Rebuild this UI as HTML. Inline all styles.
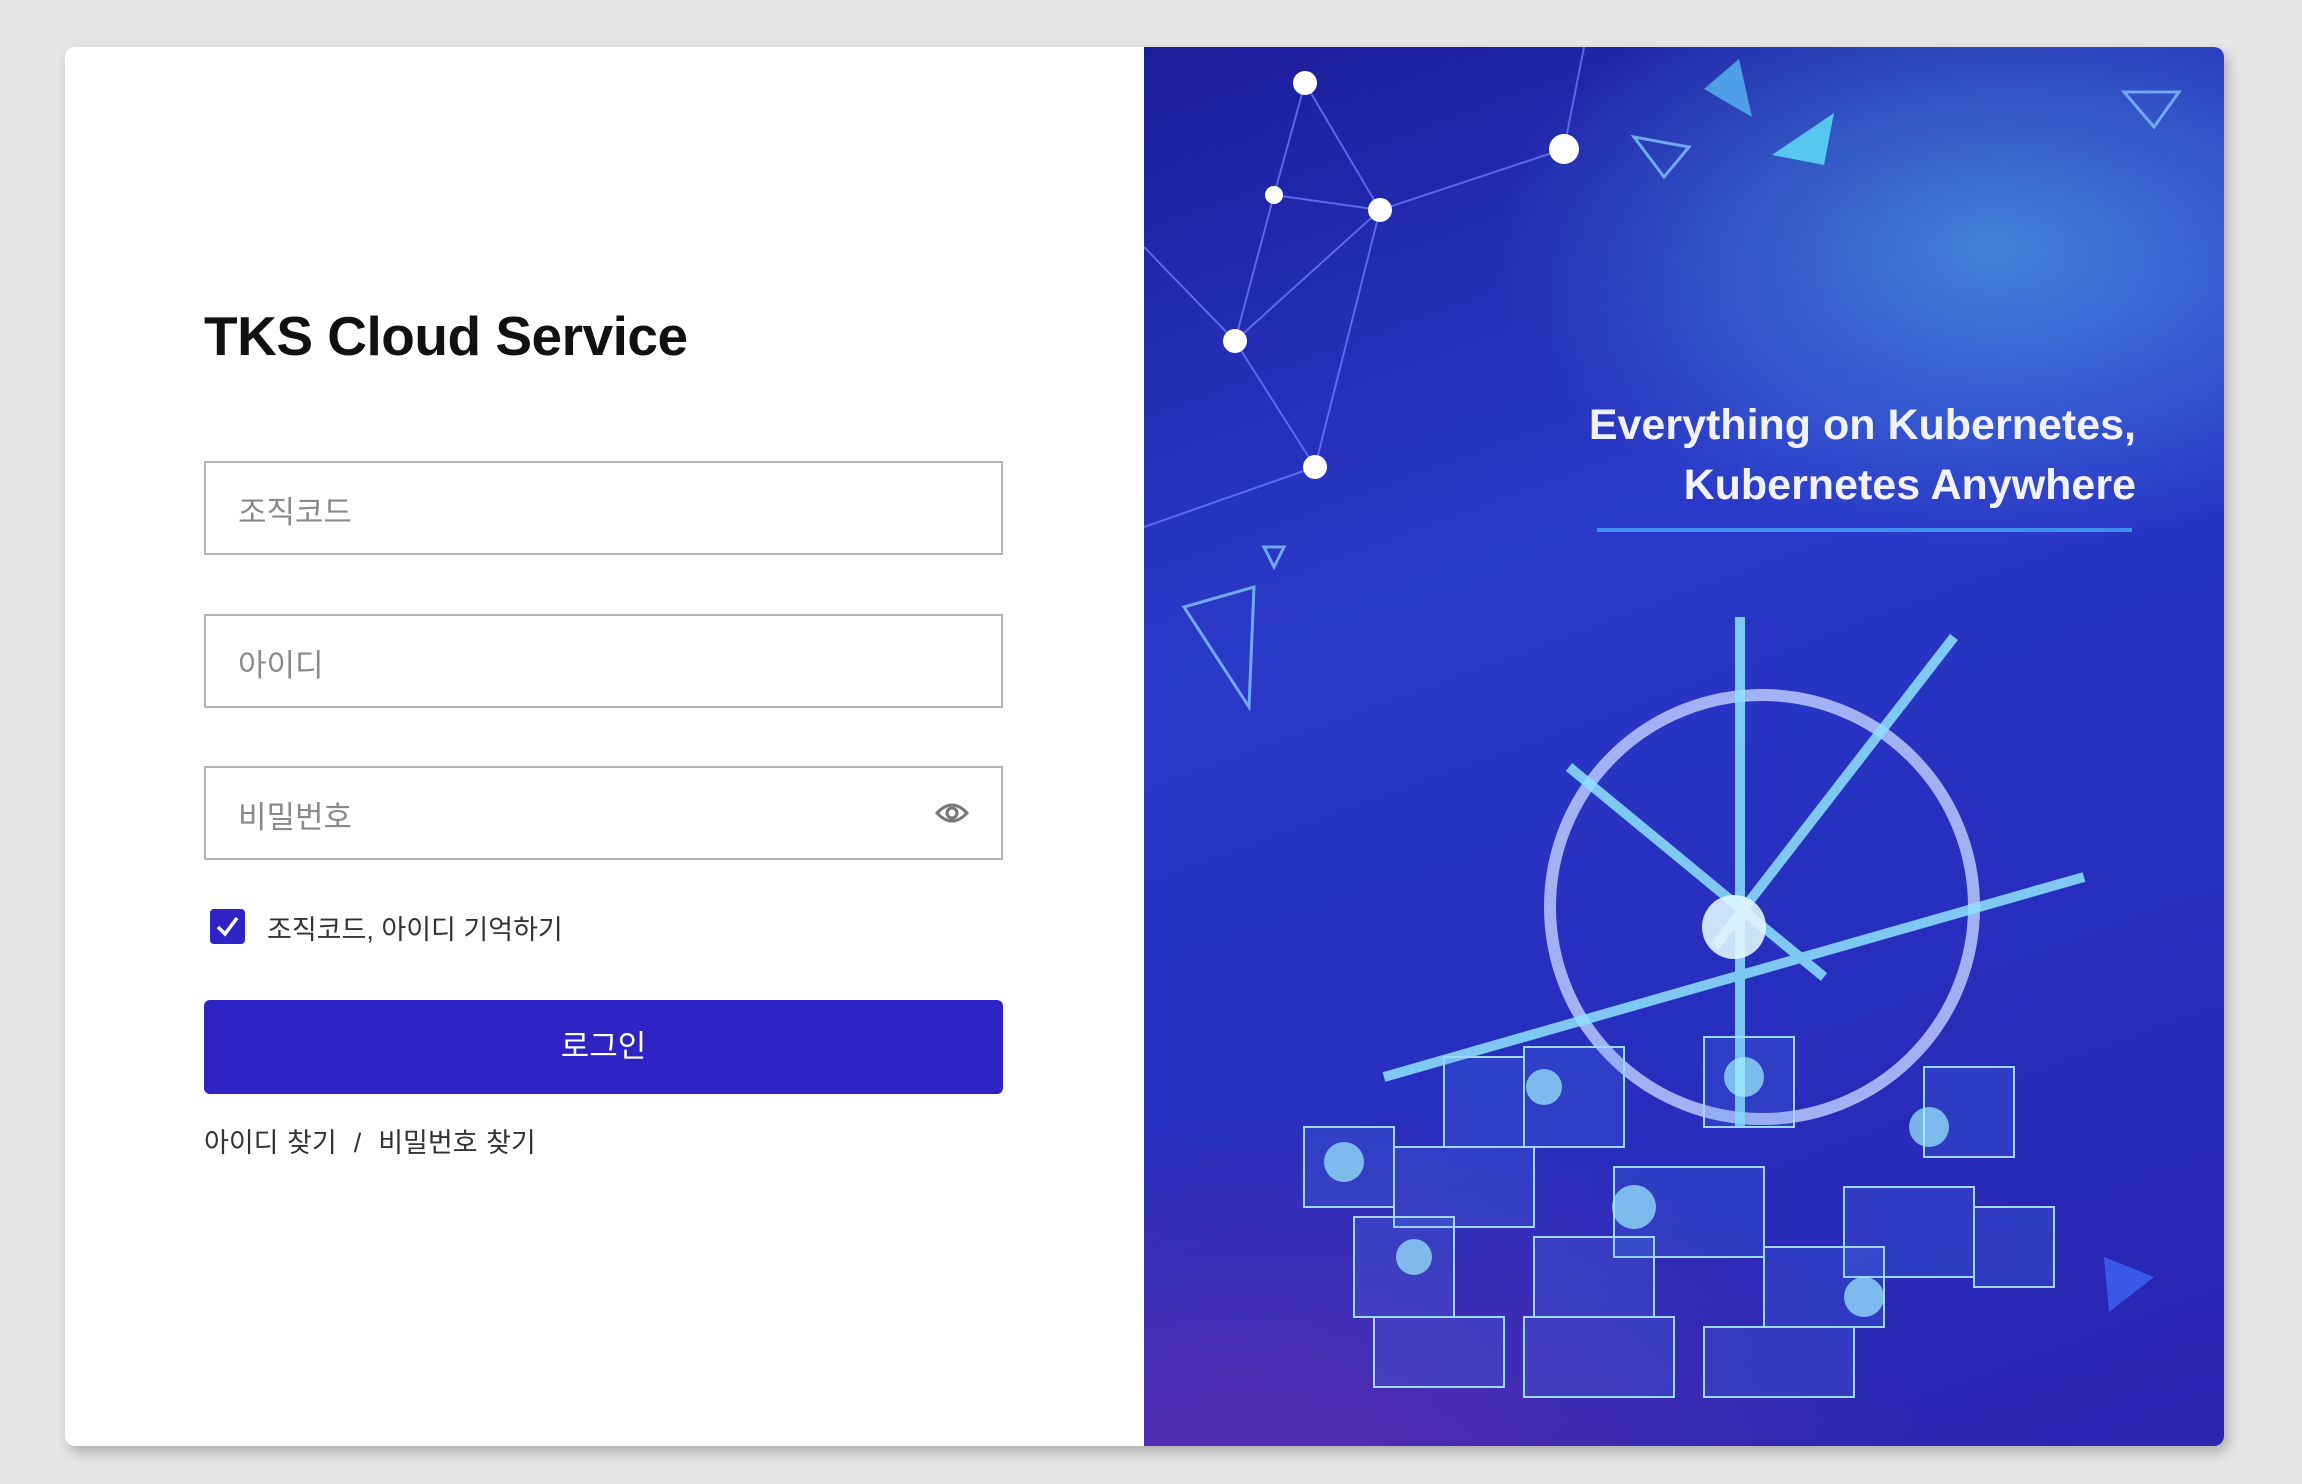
<!DOCTYPE html>
<html><head><meta charset="utf-8"><style>
html,body{margin:0;padding:0}
body{width:2302px;height:1484px;background:#e6e6e6;position:relative;overflow:hidden;font-family:"Liberation Sans","Noto Sans CJK KR",sans-serif}
.card{position:absolute;left:65px;top:47px;width:2159px;height:1399px;background:#fff;border-radius:10px;overflow:hidden;box-shadow:4px 6px 12px rgba(0,0,0,.25)}
.title{position:absolute;left:139px;top:257px;font-size:55px;font-weight:bold;color:#111;letter-spacing:-0.5px}
.inp{position:absolute;left:139px;width:799px;height:94px;border:2px solid #b4b4b4;box-sizing:border-box;}
.inp span{position:absolute;left:32px;top:24px;font-size:31px;color:#8a8a8a}
.chk{position:absolute;left:145px;top:862px;width:35px;height:35px;background:#2f23c6;border-radius:4px}
.lbl{position:absolute;left:202px;top:861px;font-size:27px;color:#333}
.btn{position:absolute;left:139px;top:953px;width:799px;height:94px;background:#2f23c6;border-radius:6px;color:#fff;font-size:31px;text-align:center;line-height:94px}
.links{position:absolute;left:139px;top:1074px;font-size:27px;color:#333;word-spacing:1px}
.right{position:absolute;left:1079px;top:0;width:1080px;height:1399px;background:
radial-gradient(ellipse 500px 300px at 850px 200px,rgba(90,190,240,.55),transparent),
radial-gradient(ellipse 700px 400px at 100px 1450px,rgba(120,50,170,.6),transparent),
linear-gradient(160deg,#1c1d9a 0%,#2a3ac8 35%,#2730c0 60%,#2a24b0 100%)}
.t1{position:absolute;right:88px;top:348px;font-size:43px;font-weight:bold;color:#f2f2ff;text-align:right;line-height:60px}
</style></head><body>
<div class="card">
<div class="title">TKS Cloud Service</div>
<div class="inp" style="top:414px"><span>조직코드</span></div>
<div class="inp" style="top:567px"><span>아이디</span></div>
<div class="inp" style="top:719px"><span>비밀번호</span>
<svg style="position:absolute;right:32px;top:31px" width="34" height="28" viewBox="0 0 34 28"><path d="M2 14 Q17 -2 32 14 Q17 30 2 14Z" fill="none" stroke="#777" stroke-width="3"/><circle cx="17" cy="14" r="5" fill="none" stroke="#777" stroke-width="3"/></svg></div>
<div class="chk"><svg width="35" height="35" viewBox="0 0 35 35"><path d="M8 18 L15 25 L27 9" fill="none" stroke="#fff" stroke-width="3.5"/></svg></div>
<div class="lbl">조직코드, 아이디 기억하기</div>
<div class="btn">로그인</div>
<div class="links">아이디 찾기 &nbsp;/ &nbsp;비밀번호 찾기</div>
<div class="right">
<svg width="1080" height="1399" style="position:absolute;left:0;top:0">
<g stroke="#6a78ff" stroke-width="2" fill="none" opacity=".8">
<path d="M161 36 L130 148 L91 294 L171 420 M161 36 L236 163 L420 102 M130 148 L236 163 L91 294 M420 102 L440 0 M236 163 L171 420 M0 200 L91 294 M0 480 L171 420"/>
</g>
<g fill="#fff"><circle cx="161" cy="36" r="12"/><circle cx="420" cy="102" r="15"/><circle cx="130" cy="148" r="9"/><circle cx="236" cy="163" r="12"/><circle cx="91" cy="294" r="12"/><circle cx="171" cy="420" r="12"/></g>
<g fill="#4f9ee8"><path d="M595 12 L608 70 L560 42Z"/><path d="M690 66 L680 118 L628 108Z" fill="#56c7ee"/><path d="M960 1210 L1010 1230 L965 1265Z" fill="#3a58e8"/></g>
<g fill="none" stroke="#6fa9f0" stroke-width="3"><path d="M490 90 L545 100 L520 130Z"/><path d="M980 45 L1035 45 L1010 80Z"/><path d="M40 560 L110 540 L105 660Z"/><path d="M120 500 L140 500 L130 520Z"/></g>
<line x1="453" y1="483" x2="988" y2="483" stroke="#3d8ff0" stroke-width="4"/>
<circle cx="618" cy="860" r="212" fill="none" stroke="#b8c8ff" stroke-width="12" opacity=".85"/>
<g stroke="#8fe3ff" stroke-width="10" fill="none" opacity=".85">
<line x1="596" y1="570" x2="596" y2="1080"/>
<line x1="240" y1="1030" x2="940" y2="830"/>
<line x1="425" y1="720" x2="680" y2="930"/>
<line x1="810" y1="590" x2="570" y2="900"/>
</g>
<circle cx="590" cy="880" r="32" fill="#dff6ff" opacity=".9"/>
<g stroke="#9fd8ff" stroke-width="2" fill="rgba(80,160,255,.15)">
<rect x="300" y="1010" width="80" height="90"/><rect x="380" y="1000" width="100" height="100"/><rect x="560" y="990" width="90" height="90"/><rect x="780" y="1020" width="90" height="90"/>
<rect x="160" y="1080" width="90" height="80"/><rect x="250" y="1100" width="140" height="80"/><rect x="470" y="1120" width="150" height="90"/><rect x="700" y="1140" width="130" height="90"/>
<rect x="210" y="1170" width="100" height="100"/><rect x="390" y="1190" width="120" height="80"/><rect x="620" y="1200" width="120" height="80"/><rect x="830" y="1160" width="80" height="80"/>
<rect x="230" y="1270" width="130" height="70"/><rect x="380" y="1270" width="150" height="80"/><rect x="560" y="1280" width="150" height="70"/>
</g>
<g fill="#9ff0ff" opacity=".7"><circle cx="200" cy="1115" r="20"/><circle cx="270" cy="1210" r="18"/><circle cx="490" cy="1160" r="22"/><circle cx="600" cy="1030" r="20"/><circle cx="785" cy="1080" r="20"/><circle cx="720" cy="1250" r="20"/><circle cx="400" cy="1040" r="18"/></g>
</svg>
<div class="t1">Everything on Kubernetes,<br>Kubernetes Anywhere</div>
</div>
</div>
</body></html>
